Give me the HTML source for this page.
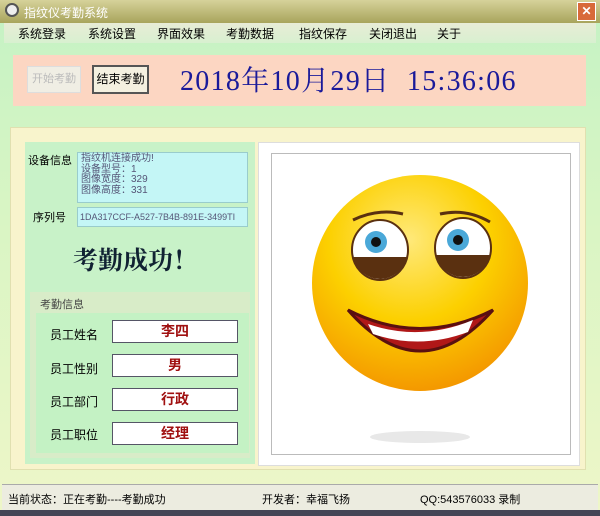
<!DOCTYPE html><html><head><meta charset="utf-8"><style>
*{margin:0;padding:0;box-sizing:border-box}
body{width:600px;height:516px;overflow:hidden;font-family:"Liberation Sans","Noto Sans CJK SC",sans-serif;font-size:12px;position:relative;background:linear-gradient(180deg,#c4f2c4 0%,#d8f5c4 40%,#eef6c8 100%)}
.a{position:absolute}
</style></head><body>
<div class="a" style="left:0;top:0;width:600px;height:23px;background:linear-gradient(180deg,#d6d29a,#a8a45c);"></div>
<div class="a" style="left:5px;top:3px;width:14px;height:14px;border-radius:50%;background:#eee;border:2px solid #555"></div>
<div class="a" style="left:24px;top:4px;color:#fff;font-size:12px">指纹仪考勤系统</div>
<div class="a" style="left:577px;top:2px;width:19px;height:19px;background:#d86a3a;border:1px solid #fff;color:#fff;text-align:center;line-height:17px;font-weight:bold">✕</div>
<div class="a" style="left:4px;top:23px;width:592px;height:20px;background:linear-gradient(180deg,#e8ecd6,#d8f0d0)"></div>
<div class="a" style="top:25px;left:18px;font-size:12px;color:#000;word-spacing:0">系统登录</div>
<div class="a" style="top:25px;left:88px">系统设置</div>
<div class="a" style="top:25px;left:157px">界面效果</div>
<div class="a" style="top:25px;left:226px">考勤数据</div>
<div class="a" style="top:25px;left:299px">指纹保存</div>
<div class="a" style="top:25px;left:369px">关闭退出</div>
<div class="a" style="top:25px;left:437px">关于</div>
<div class="a" style="left:13px;top:55px;width:573px;height:51px;background:#fcd6c2"></div>
<div class="a" style="left:27px;top:66px;width:54px;height:27px;background:#f0eee4;border:1px solid #ddd;color:#bbb;font-size:11px;text-align:center;line-height:25px">开始考勤</div>
<div class="a" style="left:92px;top:65px;width:57px;height:29px;background:#f4f0e0;border:2px solid #555;font-size:12px;text-align:center;line-height:25px">结束考勤</div>
<div class="a" style="left:180px;top:59px;font-family:'Liberation Serif','Noto Serif CJK SC',serif;font-size:28px;letter-spacing:1.3px;color:#1a1a9a;white-space:pre">2018年10月29日  15:36:06</div>
<div class="a" style="left:10px;top:127px;width:576px;height:343px;background:#f8f4cc;border:1px solid #e0e0b0"></div>
<div class="a" style="left:25px;top:142px;width:230px;height:322px;background:#c8f2c8"></div>
<div class="a" style="left:28px;top:152px;font-size:11px">设备信息</div>
<div class="a" style="left:77px;top:152px;width:171px;height:51px;background:#c4f6f6;border:1px solid #9cc;font-size:10px;line-height:10.5px;color:#557;padding:1px 3px">指纹机连接成功!<br>设备型号：1<br>图像宽度：329<br>图像高度：331</div>
<div class="a" style="left:33px;top:209px;font-size:11px">序列号</div>
<div class="a" style="left:77px;top:207px;width:171px;height:20px;background:#c4f6f6;border:1px solid #9cc;font-size:9px;color:#557;padding:4px 2px;white-space:nowrap;overflow:hidden">1DA317CCF-A527-7B4B-891E-3499TI</div>
<div class="a" style="left:73px;top:241px;font-family:'Liberation Serif','Noto Serif CJK SC',serif;font-size:25px;font-weight:bold;color:#123">考勤成功！</div>
<div class="a" style="left:30px;top:292px;width:220px;height:166px;background:#d8ecc8"></div>
<div class="a" style="left:40px;top:296px;font-size:11px;color:#444">考勤信息</div>
<div class="a" style="left:36px;top:313px;width:213px;height:140px;background:#c4f2c4"></div>
<div class="a" style="left:50px;top:326px">员工姓名</div>
<div class="a" style="left:50px;top:360px">员工性别</div>
<div class="a" style="left:50px;top:393px">员工部门</div>
<div class="a" style="left:50px;top:426px">员工职位</div>
<div class="a" style="left:112px;top:320px;width:126px;height:23px;background:#fff;border:1px solid #556;color:#a01010;font-weight:bold;font-size:14px;text-align:center;line-height:20px">李四</div>
<div class="a" style="left:112px;top:354px;width:126px;height:23px;background:#fff;border:1px solid #556;color:#a01010;font-weight:bold;font-size:14px;text-align:center;line-height:20px">男</div>
<div class="a" style="left:112px;top:388px;width:126px;height:23px;background:#fff;border:1px solid #556;color:#a01010;font-weight:bold;font-size:14px;text-align:center;line-height:20px">行政</div>
<div class="a" style="left:112px;top:422px;width:126px;height:23px;background:#fff;border:1px solid #556;color:#a01010;font-weight:bold;font-size:14px;text-align:center;line-height:20px">经理</div>
<div class="a" style="left:258px;top:142px;width:322px;height:324px;background:#fff;border:1px solid #ddd"></div>
<div class="a" style="left:271px;top:153px;width:300px;height:302px;border:1px solid #bbb"></div>
<svg class="a" style="left:258px;top:142px" width="322" height="324">
<defs><radialGradient id="f" cx="0.45" cy="0.3" r="0.75"><stop offset="0" stop-color="#ffe97a"/><stop offset="0.5" stop-color="#fcd000"/><stop offset="1" stop-color="#f39000"/></radialGradient></defs>
<ellipse cx="162" cy="295" rx="50" ry="6" fill="#e8e8e8"/>
<circle cx="162" cy="141" r="108" fill="url(#f)"/>
<ellipse cx="122" cy="108" rx="28" ry="30" fill="#fff" stroke="#5a3010" stroke-width="2"/>
<path d="M95 115 A28 30 0 0 0 149 115 Z" fill="#5a3010"/>
<circle cx="118" cy="100" r="11" fill="#4aa8d8"/><circle cx="118" cy="100" r="5" fill="#111"/>
<ellipse cx="205" cy="106" rx="28" ry="30" fill="#fff" stroke="#5a3010" stroke-width="2"/>
<path d="M178 113 A28 30 0 0 0 232 113 Z" fill="#5a3010"/>
<circle cx="200" cy="98" r="11" fill="#4aa8d8"/><circle cx="200" cy="98" r="5" fill="#111"/>
<path d="M95 78 Q120 66 145 72" stroke="#5a3010" stroke-width="3" fill="none"/>
<path d="M182 72 Q208 66 232 80" stroke="#5a3010" stroke-width="3" fill="none"/>
<path d="M90 168 Q162 250 235 168 Q162 205 90 168 Z" fill="#b01818" stroke="#5a1010" stroke-width="3"/>
<path d="M110 182 Q162 200 215 178 L210 190 Q162 208 115 192 Z" fill="#fff"/>
</svg>
<div class="a" style="left:2px;top:484px;width:596px;height:26px;background:#ecece0;border-top:1px solid #aaa"></div>
<div class="a" style="left:8px;top:491px;font-size:11px">当前状态：正在考勤----考勤成功</div>
<div class="a" style="left:262px;top:491px;font-size:11px">开发者：幸福飞扬</div>
<div class="a" style="left:420px;top:491px;font-size:11px">QQ:543576033 录制</div>
<div class="a" style="left:0;top:510px;width:600px;height:6px;background:#445"></div>
</body></html>
